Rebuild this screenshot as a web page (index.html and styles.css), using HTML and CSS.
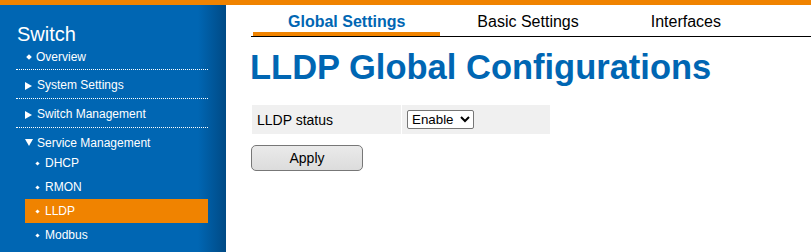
FILE: index.html
```html
<!DOCTYPE html>
<html>
<head>
    <title>LLDP Global Configurations</title>
    <link rel="stylesheet" href="styles.css">
</head>
<body>
    <div class="topbar"></div>
    <div class="layout">
        <nav class="sidebar">
            <div class="brand">Switch</div>
            <ul class="menu">
                <li class="menu-item overview"><span class="dot"></span>Overview</li>
                <li class="menu-item"><span class="arrow-right"></span>System Settings</li>
                <li class="menu-item"><span class="arrow-right"></span>Switch Management</li>
                <li class="menu-item open">
                    <div class="menu-head"><span class="arrow-down"></span>Service Management</div>
                    <ul class="submenu">
                        <li class="sub-item"><span class="dot small"></span>DHCP</li>
                        <li class="sub-item"><span class="dot small"></span>RMON</li>
                        <li class="sub-item active"><span class="dot small"></span>LLDP</li>
                        <li class="sub-item"><span class="dot small"></span>Modbus</li>
                    </ul>
                </li>
            </ul>
        </nav>

        <main class="content">
            <div class="tabs">
                <div class="tab active">Global Settings</div>
                <div class="tab">Basic Settings</div>
                <div class="tab">Interfaces</div>
            </div>

            <h1>LLDP Global Configurations</h1>

            <table class="config-table">
                <tr>
                    <td class="label">LLDP status</td>
                    <td class="value">
                        <select class="select">
                            <option>Enable</option>
                            <option>Disable</option>
                        </select>
                    </td>
                </tr>
            </table>

            <button class="button">Apply</button>
        </main>
    </div>
</body>
</html>
```

FILE: styles.css
```css
body {
    margin: 0;
    font-family: "Liberation Sans", Arial, sans-serif;
    background-color: white;
    overflow: hidden;
}

.topbar {
    height: 5px;
    background-color: #f08300;
}

.layout {
    display: flex;
    height: 247px;
}

/* sidebar */

.sidebar {
    width: 226px;
    flex-shrink: 0;
    background: linear-gradient(to right, #0066b3 0, #0066b3 198px, #004a85 226px);
    color: white;
    font-size: 12px;
}

.brand {
    margin: 17px 0 0 17px;
    font-size: 20px;
    line-height: 24px;
}

.menu {
    list-style: none;
    margin: 0 18px 0 16px;
    padding: 0;
}

.menu-item {
    padding: 8px 0 5px 9px;
    line-height: 15px;
    border-bottom: 1px dotted white;
    display: block;
}

.menu-item.overview {
    padding: 0 0 0 10px;
    line-height: 23px;
}

.menu-item.open {
    padding: 0;
    border-bottom: none;
}

.menu-head {
    padding: 8px 0 0 9px;
    line-height: 15px;
}

.submenu {
    list-style: none;
    margin: 0 0 0 9px;
    padding: 0;
}

.sub-item {
    padding: 1px 0 0 10px;
    line-height: 23px;
}

.sub-item.active {
    background-color: #f08300;
}

.dot {
    display: inline-block;
    width: 4px;
    height: 4px;
    background-color: white;
    transform: rotate(45deg);
    margin: 0 5px 1px 1px;
    vertical-align: middle;
}

.dot.small {
    width: 3px;
    height: 3px;
    margin: 0 6px 1px 1px;
}

.arrow-right {
    display: inline-block;
    width: 0;
    height: 0;
    border-left: 7px solid white;
    border-top: 4px solid transparent;
    border-bottom: 4px solid transparent;
    margin-right: 5px;
    vertical-align: -1px;
}

.arrow-down {
    display: inline-block;
    width: 0;
    height: 0;
    border-top: 7px solid white;
    border-left: 4px solid transparent;
    border-right: 4px solid transparent;
    margin-right: 4px;
    vertical-align: 1px;
}

/* content */

.content {
    flex: 1;
    padding-left: 25px;
}

.tabs {
    display: flex;
    border-bottom: 1px solid black;
}

.tab {
    margin-left: 2px;
    padding: 7px 35px 1px;
    line-height: 19px;
    font-size: 16px;
    color: black;
    border-bottom: 4px solid transparent;
}

.tab.active {
    color: #0066b3;
    font-weight: bold;
    border-bottom-color: #f08300;
}

h1 {
    margin: 10px 0 0 -1px;
    font-size: 34.5px;
    line-height: 40px;
    color: #0066b3;
}

.config-table {
    margin-top: 17px;
    width: 300px;
    border-spacing: 1px;
    font-size: 14px;
}

.config-table td {
    background-color: #f0f0f0;
    height: 29px;
    padding: 0 5px;
}

.config-table .label {
    width: 139px;
}

.select {
    font-family: "Liberation Sans", Arial, sans-serif;
    font-size: 13.33px;
    height: 19px;
    padding: 0;
    border: 1px solid #767676;
    border-radius: 2px;
    background-color: white;
    color: black;
}

.button {
    display: block;
    margin-top: 10px;
    width: 112px;
    height: 26px;
    font-family: "Liberation Sans", Arial, sans-serif;
    font-size: 14px;
    color: black;
    background: linear-gradient(to bottom, #eaeaea, #dcdcdc);
    border: 1px solid #777;
    border-radius: 5px;
}
```
